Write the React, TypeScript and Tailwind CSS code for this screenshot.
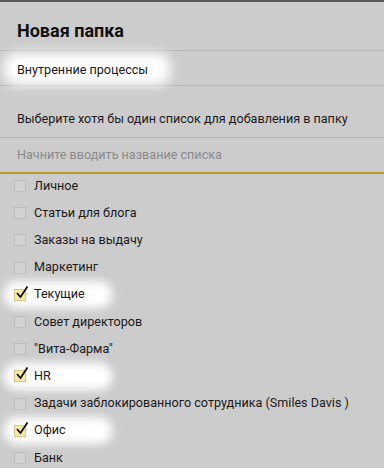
import React from "react";

const items: { label: string; checked?: boolean }[] = [
  { label: "Личное" },
  { label: "Статьи для блога" },
  { label: "Заказы на выдачу" },
  { label: "Маркетинг" },
  { label: "Текущие", checked: true },
  { label: "Совет директоров" },
  { label: "\"Вита-Фарма\"" },
  { label: "HR", checked: true },
  { label: "Задачи заблокированного сотрудника (Smiles Davis )" },
  { label: "Офис", checked: true },
  { label: "Банк" },
];

export default function App() {
  return (
    <div className="w-[384px] h-[468px] overflow-hidden bg-[#cccccc] border-t-2 border-[#575757] text-[#1a1a1a]" style={{ fontFamily: "Roboto, 'Liberation Sans', sans-serif" }}>
      <div className="h-[49px] flex items-center pt-[8px] px-[17px] border-b border-[#b5b5b5]">
        <span className="text-[18px] font-bold text-[#111]">Новая папка</span>
      </div>
      <div className="relative h-[35px] border-b border-[#b5b5b5]">
        <div className="absolute left-[4px] top-[2px] bottom-[0px] w-[166px] bg-white rounded-[12px] blur-[6px]" />
        <div className="relative h-full flex items-center pt-[4px] px-[17px] text-[12.6px]">Внутренние процессы</div>
      </div>
      <div className="h-[52px] flex items-end pb-[8px] px-[17px] text-[12.6px] border-b border-[#b5b5b5]">
        Выберите хотя бы один список для добавления в папку
      </div>
      <div className="h-[36px] flex items-center px-[17px] text-[12.6px] text-[#8a8a8a] border-b-2 border-[#b89a28]">
        Начните вводить название списка
      </div>
      <div className="mt-[-1.5px]">
        {items.map((it) => (
          <div key={it.label} className="relative h-[27.2px]">
            {it.checked && (
              <div className="absolute left-[4px] top-[0px] bottom-[0px] w-[108px] bg-white rounded-[12px] blur-[5px]" />
            )}
            <div className="relative h-full flex items-center pl-[14px] gap-[8px] text-[12.6px]">
              {it.checked ? (
                <span className="relative w-[12px] h-[12px] bg-[#f6e9a8] border border-[#d8c98a] shrink-0">
                  <svg viewBox="0 0 14 14" className="absolute left-[0px] top-[-5px] w-[14px] h-[14px]">
                    <path d="M2 8 L5.5 12 L12.5 1.5" fill="none" stroke="#111" strokeWidth="1.8" />
                  </svg>
                </span>
              ) : (
                <span className="w-[12px] h-[12px] border border-[#bdbdbd] bg-[#d2d2d2] shrink-0" />
              )}
              <span>{it.label}</span>
            </div>
          </div>
        ))}
      </div>
    </div>
  );
}
